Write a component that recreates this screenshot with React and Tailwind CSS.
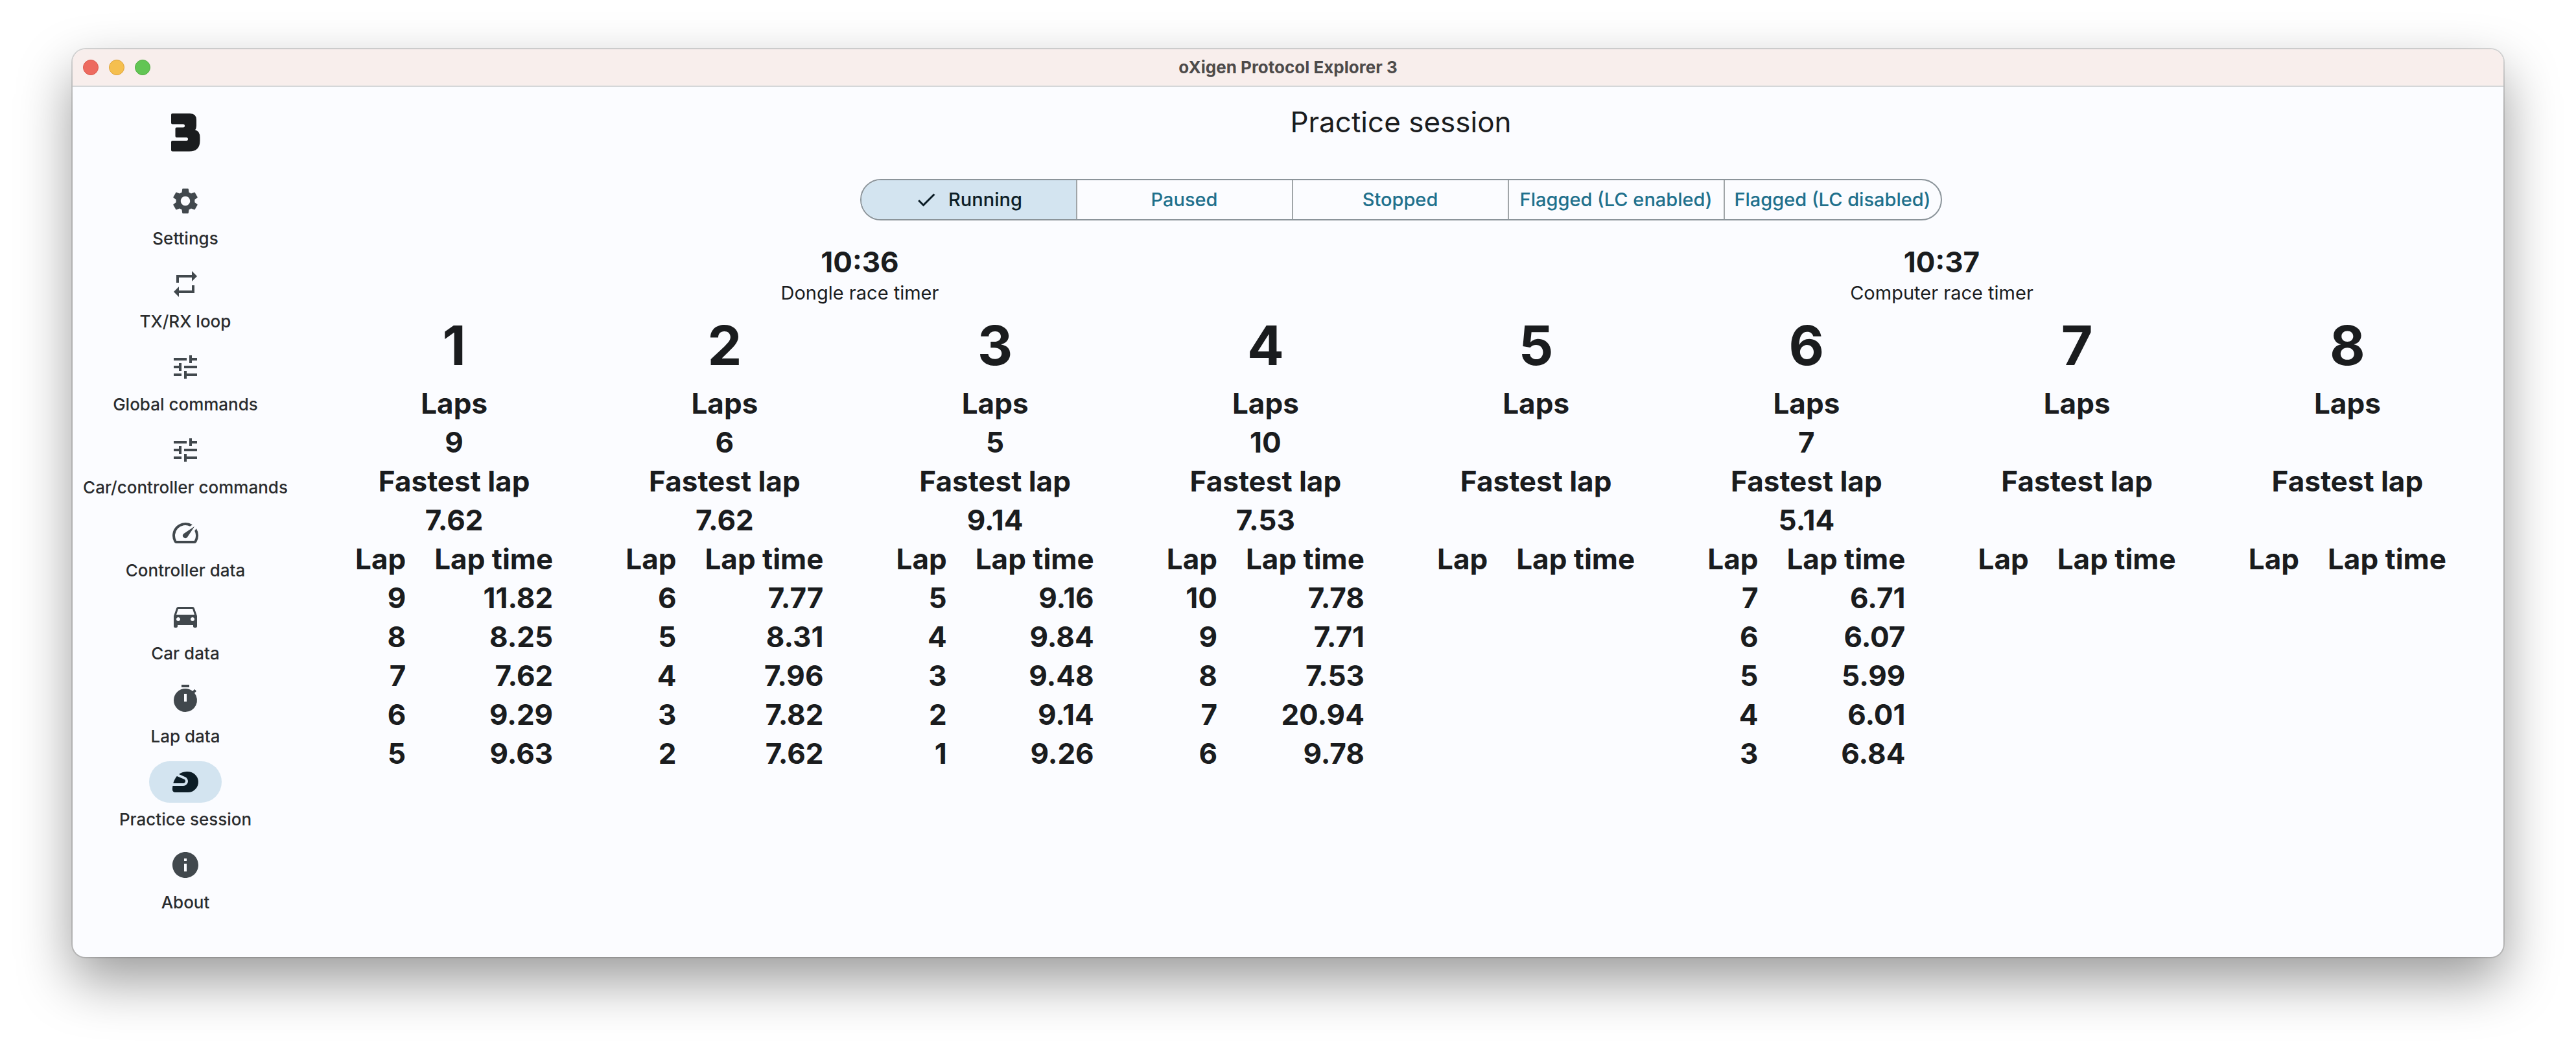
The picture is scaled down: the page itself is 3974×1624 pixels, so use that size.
import {
  MdSettings, MdRepeat, MdTune, MdSpeed, MdDirectionsCar, MdTimer,
  MdSportsMotorsports, MdInfo, MdCheck,
} from "react-icons/md";

const NAV = [
  ["Settings", MdSettings],
  ["TX/RX loop", MdRepeat],
  ["Global commands", MdTune],
  ["Car/controller commands", MdTune],
  ["Controller data", MdSpeed],
  ["Car data", MdDirectionsCar],
  ["Lap data", MdTimer],
  ["Practice session", MdSportsMotorsports],
  ["About", MdInfo],
];

const STATES = ["Running", "Paused", "Stopped", "Flagged (LC enabled)", "Flagged (LC disabled)"];

const CARS = [
  { id: 1, laps: "9", fastest: "7.62", rows: [["9", "11.82"], ["8", "8.25"], ["7", "7.62"], ["6", "9.29"], ["5", "9.63"]] },
  { id: 2, laps: "6", fastest: "7.62", rows: [["6", "7.77"], ["5", "8.31"], ["4", "7.96"], ["3", "7.82"], ["2", "7.62"]] },
  { id: 3, laps: "5", fastest: "9.14", rows: [["5", "9.16"], ["4", "9.84"], ["3", "9.48"], ["2", "9.14"], ["1", "9.26"]] },
  { id: 4, laps: "10", fastest: "7.53", rows: [["10", "7.78"], ["9", "7.71"], ["8", "7.53"], ["7", "20.94"], ["6", "9.78"]] },
  { id: 5, laps: "", fastest: "", rows: [] },
  { id: 6, laps: "7", fastest: "5.14", rows: [["7", "6.71"], ["6", "6.07"], ["5", "5.99"], ["4", "6.01"], ["3", "6.84"]] },
  { id: 7, laps: "", fastest: "", rows: [] },
  { id: 8, laps: "", fastest: "", rows: [] },
];

function TitleBar() {
  return (
    <header className="grid h-[58px] grid-cols-[1fr_auto_1fr] items-center border-b-2 border-[#d5d7d9] bg-[#f8eeec] px-4">
      <div className="flex gap-4">
        <button aria-label="Close" className="size-6 rounded-full border border-[#d9584c] bg-[#ed6a5f]" />
        <button aria-label="Minimize" className="size-6 rounded-full border border-[#dca23b] bg-[#f5bf4f]" />
        <button aria-label="Zoom" className="size-6 rounded-full border border-[#52ab42] bg-[#62c554]" />
      </div>
      <div className="text-[26px] leading-8 font-bold text-[#4d4a4a]">oXigen Protocol Explorer 3</div>
    </header>
  );
}

function Logo() {
  return (
    <svg viewBox="0 0 46 60" className="h-[60px] w-[46px] fill-[#1a1c1e]" aria-label="Logo" role="img">
      <path d="M3 1H30Q40 1 40 11V20Q40 24 38 26.500Q45.500 28 45.500 38V43Q45.500 59.500 29 59.500H3Q1 59.500 1 57.500V45Q1 43 3 43H24.500Q27 43 27 40.500Q27 38 24.500 38H9.500Q7.500 38 7.500 36V24.500Q7.500 22.500 9.500 22.500H19.500Q22 22.500 22 20Q22 17.500 19.500 17.500H3Q1 17.500 1 15.500V3Q1 1 3 1Z" />
    </svg>
  );
}

function NavRail() {
  return (
    <nav className="flex w-[348px] shrink-0 flex-col items-center pt-10">
      <Logo />
      <ul className="mt-11 flex flex-col gap-[22px]">
        {NAV.map(([label, Icon]) => {
          const active = label === "Practice session";
          return (
            <li key={label}>
              <a href="#" aria-current={active ? "page" : undefined} className="flex flex-col items-center gap-[10px]">
                <span
                  className={
                    active
                      ? "flex h-16 w-28 items-center justify-center rounded-full bg-[#d3e4f0] text-[#0c1d26]"
                      : "flex h-16 w-28 items-center justify-center rounded-full text-[#41484d]"
                  }
                >
                  <Icon className="size-12" />
                </span>
                <span className="text-[26px] leading-8 font-medium whitespace-nowrap text-[#2a2c2e]">{label}</span>
              </a>
            </li>
          );
        })}
      </ul>
    </nav>
  );
}

function StateSelector() {
  return (
    <div role="group" aria-label="Race state" className="grid h-16 w-1/2 grid-cols-5 divide-x-2 divide-[#a0a5a8] overflow-hidden rounded-full border-2 border-[#8b949a]">
      {STATES.map((label, i) => (
        <button
          key={label}
          aria-pressed={i === 0}
          className={
            i === 0
              ? "flex items-center justify-center gap-4 bg-[#d3e4f0] text-[29px] font-medium whitespace-nowrap text-[#0c1d26]"
              : "flex items-center justify-center text-[29px] font-medium whitespace-nowrap text-[#20708c]"
          }
        >
          {i === 0 && <MdCheck className="size-9" />}
          {label}
        </button>
      ))}
    </div>
  );
}

function Timer({ time, label }) {
  return (
    <div className="flex flex-col items-center">
      <div className="text-[44px] leading-[60px] font-bold">{time}</div>
      <div className="text-[29px] leading-9">{label}</div>
    </div>
  );
}

function CarColumn({ car }) {
  return (
    <section className="flex flex-col items-center text-[44px] leading-[60px] font-bold">
      <h2 className="text-[84px] leading-[118px]">{car.id}</h2>
      <div>Laps</div>
      <div className="h-[60px]">{car.laps}</div>
      <div>Fastest lap</div>
      <div className="h-[60px]">{car.fastest}</div>
      <table className="text-right">
        <thead>
          <tr>
            <th className="pr-11">Lap</th>
            <th>Lap time</th>
          </tr>
        </thead>
        <tbody>
          {car.rows.map(([lap, time]) => (
            <tr key={lap}>
              <td className="pr-11">{lap}</td>
              <td>{time}</td>
            </tr>
          ))}
        </tbody>
      </table>
    </section>
  );
}

export default function App() {
  return (
    <div className="min-h-screen bg-white px-[112px] pt-[76px] pb-[148px] font-['Inter',sans-serif] text-[#1a1c1e]">
      <div className="flex min-h-[1400px] flex-col overflow-hidden rounded-[20px] bg-[#fbfcff] shadow-[0_0_0_2px_rgba(0,0,0,0.14),0_36px_84px_rgba(0,0,0,0.4)]">
        <TitleBar />
        <div className="flex grow">
          <NavRail />
          <main className="flex grow flex-col items-center px-8 pt-6">
            <h1 className="text-[44px] leading-[60px]">Practice session</h1>
            <div className="mt-[58px] flex w-full justify-center">
              <StateSelector />
            </div>
            <div className="mt-[34px] grid w-full grid-cols-2">
              <Timer time="10:36" label="Dongle race timer" />
              <Timer time="10:37" label="Computer race timer" />
            </div>
            <div className="mt-1 grid w-full grid-cols-8">
              {CARS.map((car) => (
                <CarColumn key={car.id} car={car} />
              ))}
            </div>
          </main>
        </div>
      </div>
    </div>
  );
}
